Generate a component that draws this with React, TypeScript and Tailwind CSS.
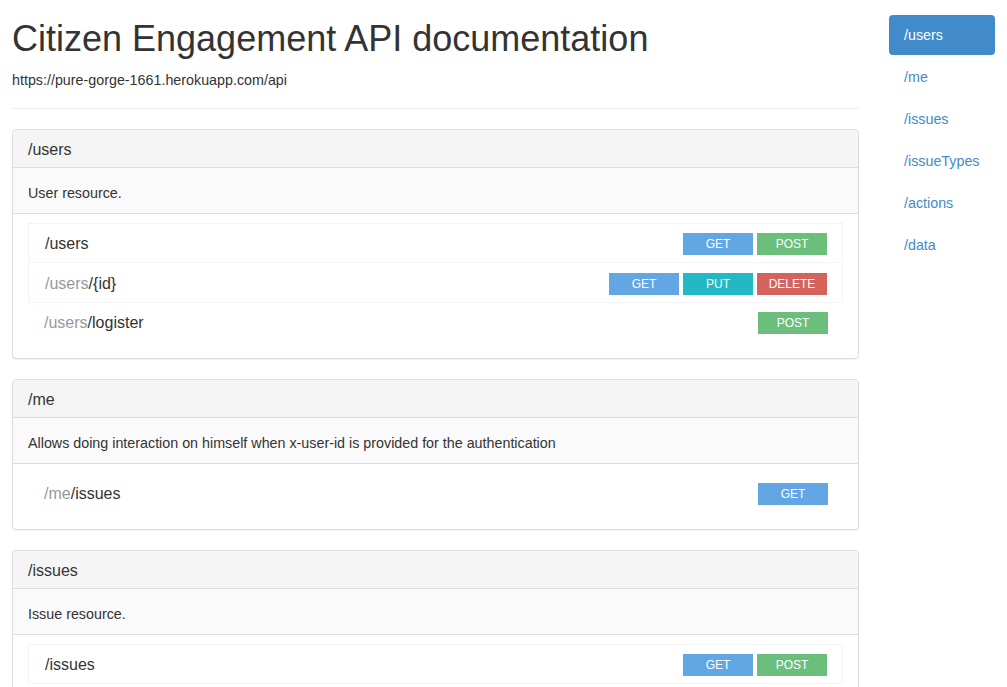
const methodColors: Record<string, string> = {
  GET: 'bg-[#62a7e3]',
  POST: 'bg-[#6bbe7c]',
  PUT: 'bg-[#22b9c5]',
  DELETE: 'bg-[#d4625d]',
}

type Endpoint = { prefix?: string; path: string; methods: string[] }
type Resource = { name: string; description: string; endpoints: Endpoint[] }

const resources: Resource[] = [
  {
    name: '/users',
    description: 'User resource.',
    endpoints: [
      { path: '/users', methods: ['GET', 'POST'] },
      { prefix: '/users', path: '{id}', methods: ['GET', 'PUT', 'DELETE'] },
      { prefix: '/users', path: 'logister', methods: ['POST'] },
    ],
  },
  {
    name: '/me',
    description: 'Allows doing interaction on himself when x-user-id is provided for the authentication',
    endpoints: [{ prefix: '/me', path: 'issues', methods: ['GET'] }],
  },
  {
    name: '/issues',
    description: 'Issue resource.',
    endpoints: [
      { path: '/issues', methods: ['GET', 'POST'] },
      { prefix: '/issues', path: '{id}', methods: ['GET', 'PUT', 'DELETE'] },
    ],
  },
]

const nav = ['/users', '/me', '/issues', '/issueTypes', '/actions', '/data']

function ResourcePanel({ resource }: { resource: Resource }) {
  const count = resource.endpoints.length
  return (
    <div className="mb-[20px] rounded-[4px] border border-[#dddddd] bg-white shadow-[0_1px_1px_rgba(0,0,0,0.05)]">
      <div className="h-[38px] rounded-t-[4px] border-b border-[#dddddd] bg-[#f5f5f5] px-[15px] pt-[8px] text-[16px] text-[#333]">
        {resource.name}
      </div>
      <div className="h-[46px] border-b border-[#dddddd] bg-[#fafafa] px-[15px] pt-[15px] text-[14.3px] text-[#333]">
        {resource.description}
      </div>
      <div className="px-[15px] pt-[9px] pb-[16px]">
        {resource.endpoints.map((ep, i) => {
          const last = i === count - 1
          return (
            <div
              key={i}
              className={`flex items-center justify-between pl-[16px] pr-[15px] ${
                last ? '' : 'border-x border-b border-[#f4f4f4]'
              } ${i === 0 && !last ? 'border-t' : ''} ${
                last && count > 1 ? 'h-[39px] pt-[1px]' : 'h-[40px] pt-[2px]'
              }`}
            >
              <div className="text-[16px] text-[#333]">
                {ep.prefix && <span className="text-[#999]">{ep.prefix}</span>}
                {ep.prefix && '/'}
                {ep.path}
              </div>
              <div className="flex gap-[4px]">
                {ep.methods.map((m) => (
                  <span
                    key={m}
                    className={`flex h-[22px] w-[70px] items-center justify-center text-[12px] text-white ${methodColors[m]}`}
                  >
                    {m}
                  </span>
                ))}
              </div>
            </div>
          )
        })}
      </div>
    </div>
  )
}

export default function App() {
  return (
    <div className="flex h-[687px] overflow-hidden bg-white px-[12px] font-['Liberation_Sans',Arial,sans-serif] text-[#333]">
      <div className="flex-1">
        <h1 className="mt-[18px] text-[36px] leading-[42px] font-normal text-[#333]">
          Citizen Engagement API documentation
        </h1>
        <p className="mt-[10px] text-[14.3px] leading-[20px]">https://pure-gorge-1661.herokuapp.com/api</p>
        <hr className="mt-[18px] mb-[20px] border-t border-[#eeeeee]" />
        {resources.map((r) => (
          <ResourcePanel key={r.name} resource={r} />
        ))}
      </div>
      <div className="ml-[30px] w-[106px] pt-[15px]">
        {nav.map((n, i) => (
          <div
            key={n}
            className={`mb-[2px] h-[40px] rounded-[4px] px-[15px] pt-[10px] text-[14.3px] ${
              i === 0 ? 'bg-[#428bca] text-white' : 'text-[#428bca]'
            }`}
          >
            {n}
          </div>
        ))}
      </div>
    </div>
  )
}
